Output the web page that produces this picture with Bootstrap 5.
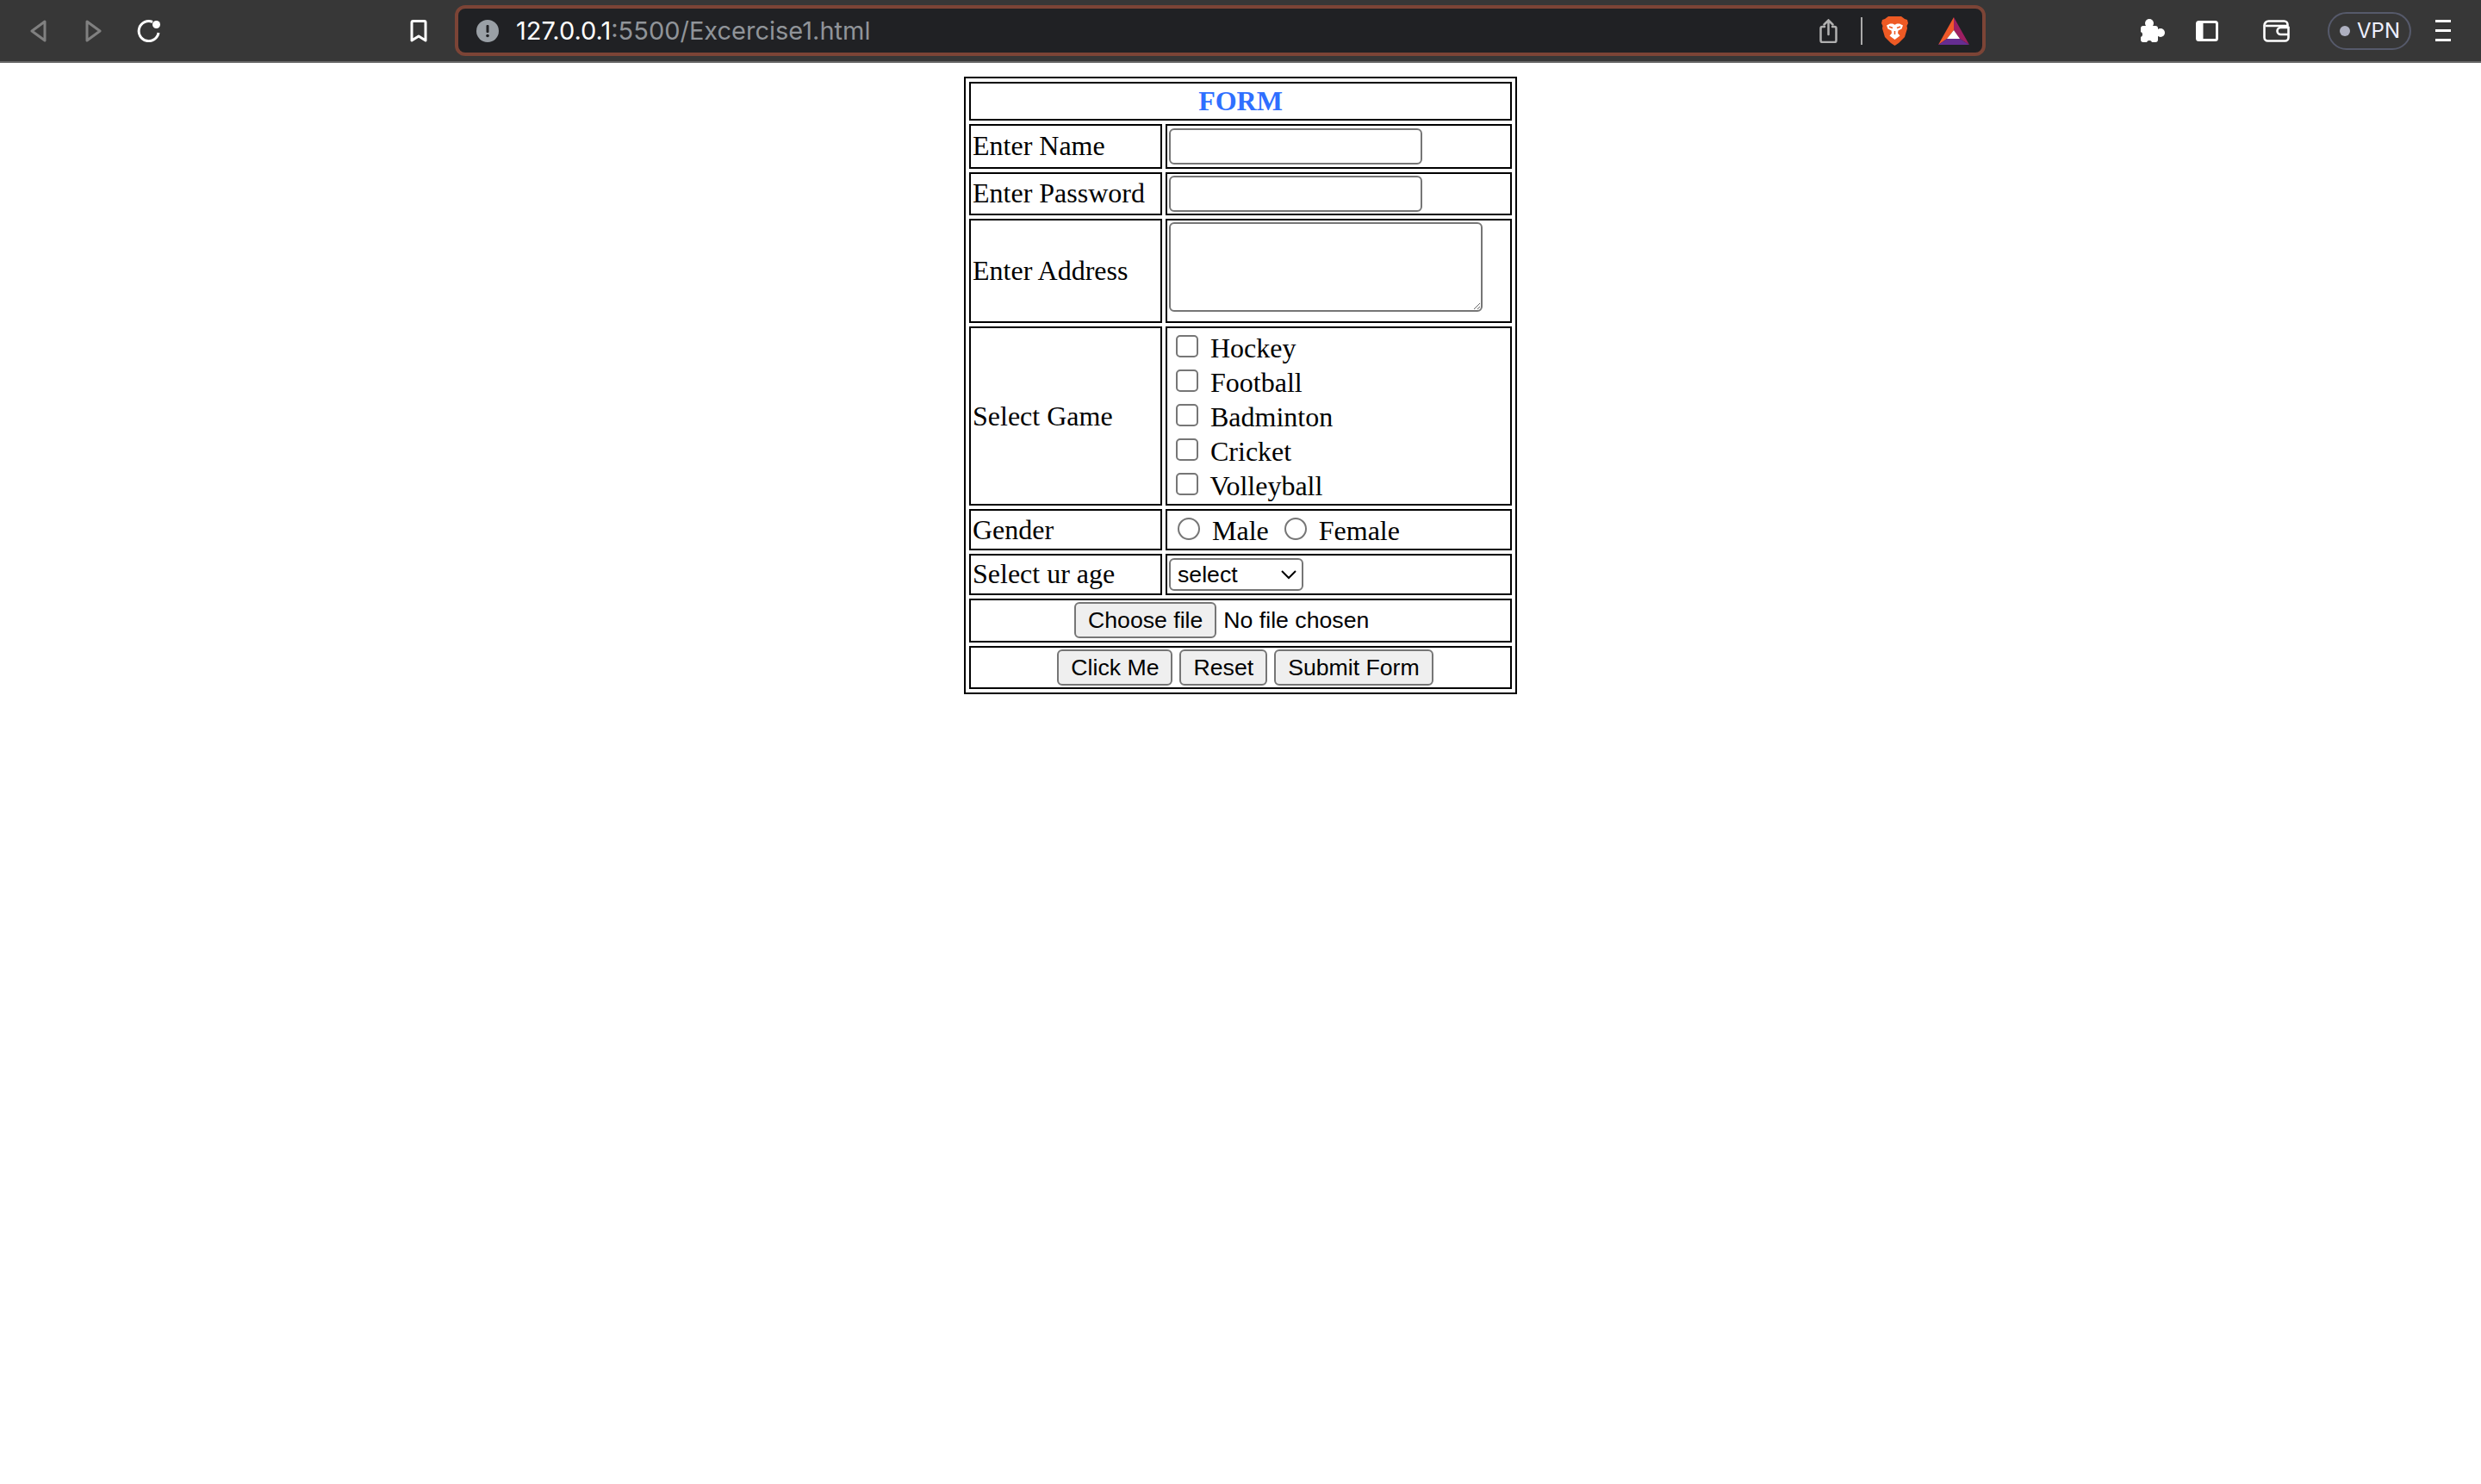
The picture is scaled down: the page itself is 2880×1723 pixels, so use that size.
<!DOCTYPE html>
<html lang="en">

<head>
    <meta charset="UTF-8" />
    <title>Excercise1</title>
    <link href="https://cdn.jsdelivr.net/npm/bootstrap@5.3.3/dist/css/bootstrap.min.css" rel="stylesheet" />
    <style>
        body { background: #fff; color: #000; font-family: "Liberation Serif", "Times New Roman", serif; font-size: 16px; line-height: normal; }

        /* browser toolbar */
        .tool-bar { height: 73px; background: #373737; border-bottom: 2px solid #666; padding-left: 35px; }
        .tool-bar svg { display: block; flex: none; }
        .ic-fwd { margin-left: 45px; }
        .ic-reload { margin-left: 41px; }
        .ic-mark { margin-left: 290px; }
        .url-box { flex: none; width: 1777px; height: 59px; margin-left: 32px; background: #202124; border: 4px solid #7c4436; border-radius: 12px; padding: 0 15px 0 21px; }
        .url-text { font-family: Inter, "Liberation Sans", sans-serif; font-size: 29px; color: #909499; margin-left: 20px; }
        .url-host { color: #fff; }
        .url-sep { flex: none; width: 2px; height: 32px; margin-left: 27px; background: #aaa; }
        .ic-brave { margin-left: 22px; }
        .ic-bat { margin-left: 35px; }
        .ic-puzzle { margin-left: 179px; }
        .ic-side { margin-left: 36px; }
        .ic-wallet { margin-left: 52px; }
        .vpn-pill { flex: none; width: 97px; height: 44px; margin-left: 44px; padding-left: 12px; border: 2.5px solid #565a6b; border-radius: 22px; font-family: Inter, "Liberation Sans", sans-serif; font-size: 24px; color: #eef0ff; }
        .vpn-dot { width: 12px; height: 12px; margin-right: 8px; border-radius: 50%; background: #aeb0c0; }
        .ic-menu { margin-left: 28px; }

        /* the form table is a 1x page shot at 2x */
        .form-table { zoom: 2; width: 321px; margin: 8px auto 0; border: 1px solid #000; border-collapse: separate; border-spacing: 2px; }
        .form-table td, .form-table th { border: 1px solid #000; padding: 1px; }
        .form-table .tall-row td { padding-bottom: 1.5px; }
        .form-title { color: #2f6fff; text-align: center; }
        .label-cell { width: 112px; }
        .form-table input, .form-table select, .form-table textarea, .form-table button { font-family: "Liberation Sans", Arial, sans-serif; font-size: 13.333px; line-height: normal; color: #000; }
        .form-table input[type=checkbox] { margin: 3px 3px 3px 4px; }
        .form-table input[type=radio] { margin: 3px 3px 0 5px; }
        .text-field { width: 147px; height: 21px; padding: 1px 2px; border: 1px solid #767676; border-radius: 3px; vertical-align: middle; }
        .area-field { display: block; width: 182px; height: 52px; padding: 2px; border: 1px solid #767676; border-radius: 3px; resize: both; margin-bottom: 4px; }
        .age-select { width: 78px; height: 19px; border: 1px solid #767676; border-radius: 3px; background: #fff; }
        .plain-btn { height: 21px; padding: 1px 7px; background: #efefef; border: 1px solid #767676; border-radius: 3px; }
        .first-btn { margin-left: 5.5px; }
        .file-pick { display: inline-block; width: 193px; text-align: left; }
        .file-note { font-family: "Liberation Sans", Arial, sans-serif; font-size: 13.333px; margin-left: 4px; }
    </style>
</head>

<body>
    <div class="tool-bar d-flex align-items-center">
        <svg width="19" height="26" viewBox="0 0 19 26" fill="none" stroke="#808080" stroke-width="3" stroke-linejoin="round"><path d="M17 2 2 13l15 11z" /></svg>
        <svg class="ic-fwd" width="19" height="26" viewBox="0 0 19 26" fill="none" stroke="#808080" stroke-width="3" stroke-linejoin="round"><path d="M2 2l15 11L2 24z" /></svg>
        <svg class="ic-reload" width="27" height="26" viewBox="0 0 27 26"><path d="M18 2.5A11.5 11.5 0 1 0 25 15" fill="none" stroke="#fff" stroke-width="3" /><circle cx="22.5" cy="5.5" r="4.5" fill="#fff" /></svg>
        <svg class="ic-mark" width="20" height="26" viewBox="0 0 20 26" fill="none" stroke="#fff" stroke-width="3" stroke-linejoin="round"><path d="M3.5 1.5h13A1.5 1.5 0 0 1 18 3v21l-8-5-8 5V3a1.5 1.5 0 0 1 1.5-1.5z" /></svg>
        <div class="url-box d-flex align-items-center">
            <svg width="26" height="26" viewBox="0 0 26 26"><circle cx="13" cy="13" r="13" fill="#9aa0a6" /><rect x="11.5" y="6" width="3" height="9" rx="1" fill="#202124" /><circle cx="13" cy="18.5" r="1.8" fill="#202124" /></svg>
            <span class="url-text"><span class="url-host">127.0.0.1</span>:5500/Excercise1.html</span>
            <svg class="ms-auto" width="21" height="28" viewBox="0 0 21 28" fill="none" stroke="#b0b0b0" stroke-width="2.5" stroke-linecap="round"><path d="M6 9H3.5a2 2 0 0 0-2 2v14a2 2 0 0 0 2 2h14a2 2 0 0 0 2-2V11a2 2 0 0 0-2-2H15" /><path d="M10.5 18V2M5.5 6.5l5-5 5 5" /></svg>
            <span class="url-sep"></span>
            <svg class="ic-brave" width="31" height="35" viewBox="0 0 31 35"><path d="M8 1h15l4 3 3 1 1 4-1.500 3 .5 3-3 10-7 7-4.500 3-4.500-3-7-7-3-10 .5-3L0 9l1-4 3-1z" fill="#ee5a24" /><path d="M6 11.500l4-2h3l2.500 1.200L18 9.500h3l4 2-1.500 4-4 2-.5 3 2.500 3-6 4.500-6-4.500 2.500-3-.5-3-4-2z" fill="#fff" /><path d="M9 13l4 1.500M22 13l-4 1.500M15.500 18v4" stroke="#ee5a24" stroke-width="1.500" fill="none" /></svg>
            <svg class="ic-bat" width="36" height="32" viewBox="0 0 36 32"><path d="M18 0v15l-8 10-10 7z" fill="#f0592a" /><path d="M18 0l18 32-11-7-7-10z" fill="#9e1f63" /><path d="M0 32l10-7h15l11 7z" fill="#662d91" /><path d="M18 15l7 10H10z" fill="#fff" /></svg>
        </div>
        <svg class="ic-puzzle" width="29" height="28" viewBox="0 0 29 28"><rect x="1" y="8" width="20" height="19" rx="3" fill="#fff" /><circle cx="11" cy="5" r="5" fill="#fff" /><circle cx="24" cy="16" r="5" fill="#fff" /><circle cx="0" cy="18" r="3" fill="#373737" /><circle cx="11" cy="28" r="3" fill="#373737" /></svg>
        <svg class="ic-side" width="26" height="24" viewBox="0 0 26 24"><rect x="1.500" y="1.500" width="23" height="21" rx="2" fill="none" stroke="#fff" stroke-width="3" /><rect x="1.500" y="1.500" width="7" height="21" fill="#fff" /></svg>
        <svg class="ic-wallet" width="31" height="26" viewBox="0 0 31 26" fill="none" stroke="#fff" stroke-width="2.600"><path d="M1.500 6.500a5 5 0 0 1 5-5h18a4 4 0 0 1 4 4v3M1.500 6.500v14a4 4 0 0 0 4 4h20a4 4 0 0 0 4-4v-3M29.500 9h-9a4 4 0 0 0 0 8h9zM3 7h25" /></svg>
        <div class="vpn-pill d-flex align-items-center"><span class="vpn-dot"></span>VPN</div>
        <svg class="ic-menu" width="18" height="25" viewBox="0 0 18 25"><rect width="18" height="3" fill="#fff" /><rect y="11" width="18" height="3" fill="#fff" /><rect y="22" width="18" height="3" fill="#fff" /></svg>
    </div>

    <form>
        <table class="form-table">
            <tr>
                <th colspan="2" class="form-title">FORM</th>
            </tr>
            <tr class="tall-row">
                <td class="label-cell">Enter Name</td>
                <td><input type="text" class="text-field" /></td>
            </tr>
            <tr>
                <td class="label-cell">Enter Password</td>
                <td><input type="password" class="text-field" /></td>
            </tr>
            <tr class="tall-row">
                <td class="label-cell">Enter Address</td>
                <td><textarea class="area-field"></textarea></td>
            </tr>
            <tr>
                <td class="label-cell">Select Game</td>
                <td>
                    <input type="checkbox" /> Hockey<br />
                    <input type="checkbox" /> Football<br />
                    <input type="checkbox" /> Badminton<br />
                    <input type="checkbox" /> Cricket<br />
                    <input type="checkbox" /> Volleyball
                </td>
            </tr>
            <tr>
                <td class="label-cell">Gender</td>
                <td><input type="radio" name="gender" /> Male <input type="radio" name="gender" /> Female</td>
            </tr>
            <tr class="tall-row">
                <td class="label-cell">Select ur age</td>
                <td>
                    <select class="age-select">
                        <option>select</option>
                    </select>
                </td>
            </tr>
            <tr class="tall-row">
                <td colspan="2" class="text-center"><span class="file-pick"><button type="button" class="plain-btn">Choose file</button><span class="file-note">No file chosen</span></span></td>
            </tr>
            <tr>
                <td colspan="2" class="text-center">
                    <button type="button" class="plain-btn first-btn">Click Me</button>
                    <button type="reset" class="plain-btn">Reset</button>
                    <button type="submit" class="plain-btn">Submit Form</button>
                </td>
            </tr>
        </table>
    </form>

    <script src="https://cdn.jsdelivr.net/npm/bootstrap@5.3.3/dist/js/bootstrap.bundle.min.js"></script>
</body>

</html>
